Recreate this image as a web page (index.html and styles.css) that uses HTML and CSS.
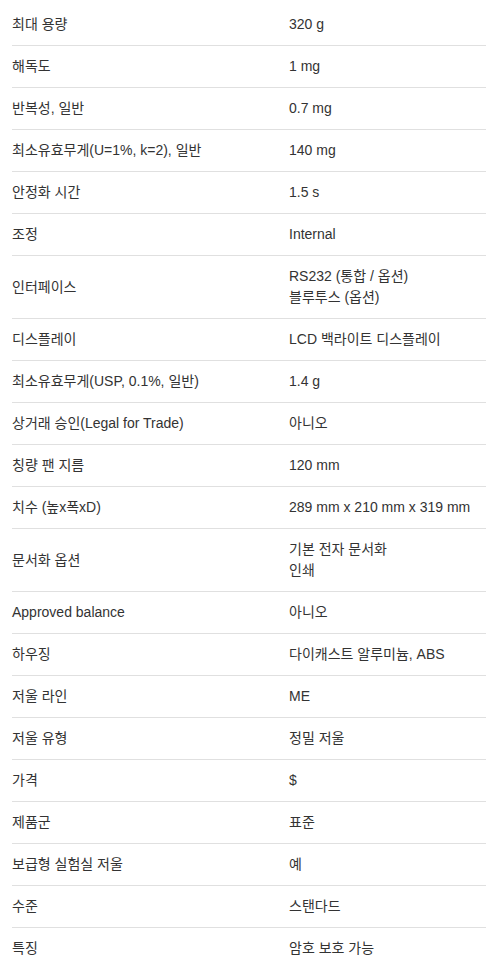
FILE: index.html
```html
<!DOCTYPE html>
<html lang="ko">
<head>
<meta charset="utf-8">
<link rel="stylesheet" href="styles.css">
</head>
<body>
<div class="specs">
  <div class="row"><div class="k">최대 용량</div><div class="v">320 g</div></div>
  <div class="row"><div class="k">해독도</div><div class="v">1 mg</div></div>
  <div class="row"><div class="k">반복성, 일반</div><div class="v">0.7 mg</div></div>
  <div class="row"><div class="k">최소유효무게(U=1%, k=2), 일반</div><div class="v">140 mg</div></div>
  <div class="row"><div class="k">안정화 시간</div><div class="v">1.5 s</div></div>
  <div class="row"><div class="k">조정</div><div class="v">Internal</div></div>
  <div class="row"><div class="k">인터페이스</div><div class="v">RS232 (통합 / 옵션)<br>블루투스 (옵션)</div></div>
  <div class="row"><div class="k">디스플레이</div><div class="v">LCD 백라이트 디스플레이</div></div>
  <div class="row"><div class="k">최소유효무게(USP, 0.1%, 일반)</div><div class="v">1.4 g</div></div>
  <div class="row"><div class="k">상거래 승인(Legal for Trade)</div><div class="v">아니오</div></div>
  <div class="row"><div class="k">칭량 팬 지름</div><div class="v">120 mm</div></div>
  <div class="row"><div class="k">치수 (높x폭xD)</div><div class="v">289 mm x 210 mm x 319 mm</div></div>
  <div class="row"><div class="k">문서화 옵션</div><div class="v">기본 전자 문서화<br>인쇄</div></div>
  <div class="row"><div class="k">Approved balance</div><div class="v">아니오</div></div>
  <div class="row"><div class="k">하우징</div><div class="v">다이캐스트 알루미늄, ABS</div></div>
  <div class="row"><div class="k">저울 라인</div><div class="v">ME</div></div>
  <div class="row"><div class="k">저울 유형</div><div class="v">정밀 저울</div></div>
  <div class="row"><div class="k">가격</div><div class="v">$</div></div>
  <div class="row"><div class="k">제품군</div><div class="v">표준</div></div>
  <div class="row"><div class="k">보급형 실험실 저울</div><div class="v">예</div></div>
  <div class="row"><div class="k">수준</div><div class="v">스탠다드</div></div>
  <div class="row last"><div class="k">특징</div><div class="v">암호 보호 가능</div></div>
</div>
</body>
</html>
```
FILE: styles.css
```css
html, body {
  margin: 0;
  padding: 0;
  background: #fff;
}
body {
  font-family: "Liberation Sans", Arial, "Noto Sans CJK KR", sans-serif;
  font-size: 14px;
  line-height: 21px;
  color: #333;
}
.specs {
  padding: 4px 0 0 12px;
}
.row {
  display: grid;
  grid-template-columns: 277px 1fr;
  align-items: center;
  padding: 10px 0;
  border-bottom: 1px solid #e0e0e0;
}
.row.last {
  border-bottom: none;
}
```
